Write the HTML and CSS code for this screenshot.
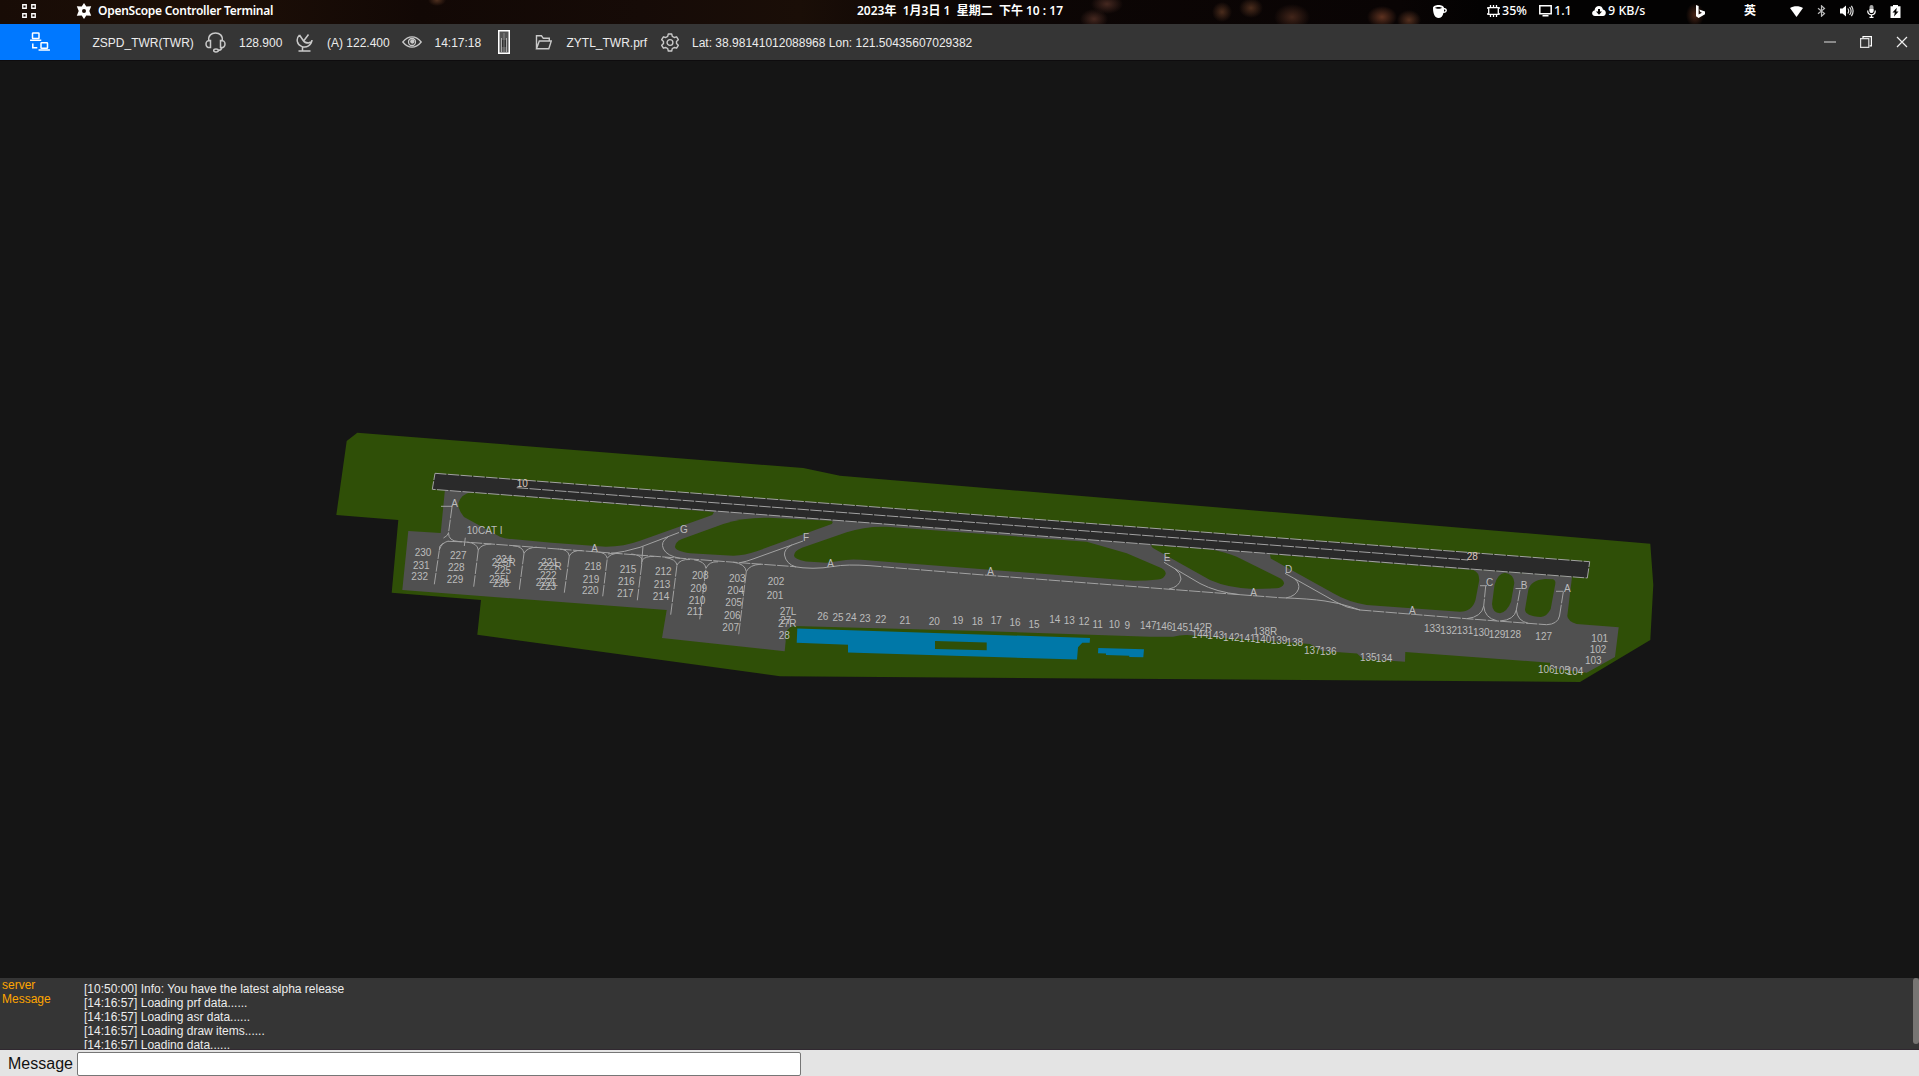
FILE: index.html
```html
<!DOCTYPE html>
<html lang="en">
<head>
<meta charset="utf-8">
<title>OpenScope Controller Terminal</title>
<link rel="stylesheet" href="styles.css">
</head>
<body>
<header class="panel">
  <div class="panel-left">
    <svg class="apps" width="14" height="14" viewBox="0 0 14 14"><path d="M.75.75h3.5v3.5H.75zM9.75.75h3.5v3.5h-3.5zM.75 9.75h3.5v3.5H.75zM9.75 9.75h3.5v3.5h-3.5z" fill="none" stroke="#fff" stroke-width="1.3"/></svg>
    <svg class="star" width="16" height="16" viewBox="0 0 16 16"><path fill="#fff" fill-rule="evenodd" d="M8 0l2.300 3.400 4.900-.1L13.300 8l1.900 4.700-4.900-.1L8 16l-2.300-3.400-4.900.1L2.700 8 .8 3.300l4.900.1zM8 6a2 2 0 1 0 0 4 2 2 0 0 0 0-4z"/></svg>
    <span class="app-name">OpenScope Controller Terminal</span>
  </div>
  <div class="clock">2023年&nbsp; 1月3日 1&nbsp; 星期二&nbsp; 下午 10 : 17</div>
  <div class="tray">
    <span class="t-cup"><svg width="14" height="13" viewBox="0 0 14 13"><path fill="#fff" fill-rule="evenodd" d="M0 3c0-4 11-4 11 0 4-.5 4 5-.6 5C10 11 8 13 5.500 13 2 13 0 9 0 3zm2-.2c1.500 1.300 5.500 1.300 7 0-1.500-1.200-5.500-1.200-7 0zM11 4.500v2c2 0 2-2 0-2z"/></svg></span>
    <span class="t-cpu"><svg width="13" height="12" viewBox="0 0 13 12"><path d="M1.700 2.700h9.600v6.600H1.700zM3.500 0v2M6.500 0v2M9.500 0v2M3.500 10v2M6.500 10v2M9.500 10v2M0 3h1M0 9h1M12 3h1M12 9h1" fill="none" stroke="#fff" stroke-width="1.300"/></svg><b>35%</b></span>
    <span class="t-load"><svg width="13" height="12" viewBox="0 0 13 12"><path d="M.8.8h11.400v8H.8z" fill="none" stroke="#fff" stroke-width="1.500"/><path fill="#fff" d="M3.500 10h6v1.500h-6z"/></svg><b>1.1</b></span>
    <span class="t-net"><svg width="14" height="10" viewBox="0 0 14 10"><path fill="#fff" fill-rule="evenodd" d="M3 10C-1 9.500-.5 5 2.500 4.500 3-1 10-1.500 11 3.500c4 .5 3.500 6.500 0 6.500zM6 3v2.500H4L7 8.800l3-3.300H8V3z"/></svg><b>9 KB/s</b></span>
    <span class="t-bing"><svg width="9" height="13" viewBox="0 0 9 13"><path fill="#fff" d="M0 0l2.600 1v8.500L6 7.700 4.300 7l-1-2.500L9 6.500v2.800L2.600 13 0 11.300z"/></svg></span>
    <span class="t-ime"><b>英</b></span>
    <span class="t-wifi"><svg width="13" height="11" viewBox="0 0 13 11"><path fill="#fff" d="M0 2c3.500-2.500 9.500-2.500 13 0L6.500 11z"/></svg></span>
    <span class="t-bt"><svg width="9" height="12" viewBox="0 0 9 12"><path d="M1 3.200l6.500 5.300-3 2.700V.8l3 2.700L1 8.800" fill="none" stroke="#bbb" stroke-width="1.200"/></svg></span>
    <span class="t-vol"><svg width="14" height="12" viewBox="0 0 14 12"><path fill="#fff" d="M0 3.500h2.500L6 .5v11l-3.500-3H0z"/><path d="M7.800 3.500q1.800 2.500 0 5M9.600 2q3 4 0 8M11.400.8q3.400 5.200 0 10.400" fill="none" stroke="#ddd" stroke-width="1.200"/></svg></span>
    <span class="t-mic"><svg width="9" height="13" viewBox="0 0 9 13"><rect x="2.500" width="4" height="8" rx="2" fill="#aaa"/><path d="M2.500 4h4v2a2 2 0 0 1-4 0z" fill="#fff"/><path d="M.7 5.500q0 4.300 3.800 4.300t3.800-4.300M4.500 10v2.300M2.500 12.300h4" fill="none" stroke="#fff" stroke-width="1.200"/></svg></span>
    <span class="t-bat"><svg width="11" height="13" viewBox="0 0 11 13"><path fill="#fff" fill-rule="evenodd" d="M3 0h5v1.200h2.500V13H.5V1.200H3zM6.800 2.800L2.500 7.500h2.300L4 11.500l4.500-5H6.200z"/></svg></span>
  </div>
</header>

<nav class="toolbar">
  <button class="connect" aria-label="Connection"><svg width="20" height="20" viewBox="0 0 20 20" fill="none" stroke="#fff" stroke-width="1.500"><rect x="2.500" y="1" width="6.500" height="5.500" rx=".6"/><path d="M.8 9v-.8h9.700V9M2.800 11.500v4.300h4.500"/><rect x="11" y="10.800" width="6.500" height="5.500" rx=".6"/><path d="M9.300 18.700v-.7h9.900v.7"/></svg></button>
  <span class="f-call">ZSPD_TWR(TWR)</span>
  <span class="f-headset"><svg width="21" height="21" viewBox="0 0 21 21" fill="none" stroke="#c9c9c9" stroke-width="1.500"><path d="M3.800 8.500C3 3.500 6.500 1 10.500 1s7.500 2.500 6.700 7.500"/><path d="M5.500 8.500v7C2.500 16 1 14.500 1 12s1.500-3.700 4.500-3.500zM15.500 8.500v7c3 .5 4.500-1 4.500-3.500s-1.500-3.700-4.500-3.500zM17 15.500c-.5 2-2 3-4 3"/><ellipse cx="11" cy="18.500" rx="2.300" ry="1.400"/></svg></span>
  <span class="f-freq">128.900</span>
  <span class="f-dish"><svg width="18" height="19" viewBox="0 0 18 19" fill="none" stroke="#c9c9c9" stroke-width="1.500"><path d="M3.500 2C-.5 6 1 12 6 13.600c4.500 1.400 9.500-1 10-6.600M3.500 2l3.700 5.500q1.500 2.500 5.300 2.500l3.500-1.500M8 7.500L12.500 1.500M6.500 14v3.500M2.500 18h12"/></svg></span>
  <span class="f-atis">(A) 122.400</span>
  <span class="f-eye"><svg width="20" height="12" viewBox="0 0 20 12" fill="none" stroke="#c9c9c9" stroke-width="1.300"><path d="M.8 6Q5 .8 10 .8T19.200 6Q15 11.200 10 11.200T.8 6z"/><circle cx="10" cy="6" r="3.500"/><circle cx="10.300" cy="5.500" r="1.500" fill="#c9c9c9"/></svg></span>
  <span class="f-time">14:17:18</span>
  <span class="f-strip"><svg width="12" height="24" viewBox="0 0 12 24"><rect x=".75" y=".75" width="10.500" height="22.500" fill="#555" stroke="#fff" stroke-width="1.500"/><path d="M3.500 8v14M8.500 8v14" stroke="#aaa"/><path d="M6 3v19" stroke="#888"/><path d="M4.800 10v7M7.200 10v7" stroke="#222"/></svg></span>
  <span class="f-folder"><svg width="17" height="15" viewBox="0 0 17 15" fill="none" stroke="#c9c9c9" stroke-width="1.400"><path d="M1.500 13.800V.8h5l1.800 2.500h6V6M1.500 13.800L4.300 6h12l-2.500 7.800z"/></svg></span>
  <span class="f-prf">ZYTL_TWR.prf</span>
  <span class="f-gear"><svg width="18" height="19" viewBox="0 0 18 19" fill="none" stroke="#c9c9c9" stroke-width="1.400"><path stroke-linejoin="round" d="M7.300 1h3.400l.6 2.400 1.900 1.100 2.400-.7 1.700 2.900-1.800 1.700v2.200l1.800 1.700-1.700 2.900-2.400-.7-1.900 1.100-.6 2.400H7.300l-.6-2.400-1.900-1.100-2.400.7-1.700-2.900 1.800-1.700V8.400L.7 6.700l1.700-2.900 2.400.7 1.900-1.100z"/><circle cx="9" cy="9.500" r="2.900"/></svg></span>
  <span class="f-pos">Lat: 38.98141012088968 Lon: 121.50435607029382</span>
  <span class="window-buttons">
    <svg width="12" height="12" viewBox="0 0 12 12"><path d="M0 6h12" stroke="#8a8a8a" stroke-width="2"/></svg>
    <svg width="12" height="12" viewBox="0 0 12 12" fill="none"><path d="M3 2V.6h8.400v9.200H9.500" stroke="#fff" stroke-width="1.200"/><path d="M.6 2.600h8.200v8.800H.6z" stroke="#ddd" stroke-width="1.200"/></svg>
    <svg width="12" height="12" viewBox="0 0 12 12"><path d="M1 1l10 10M11 1L1 11" stroke="#eee" stroke-width="1.200"/></svg>
  </span>
</nav>

<main class="scope">
<svg class="map" width="1919" height="918" viewBox="0 60 1919 918">
  <path class="grass" d="M357.300 432.700L346.700 441 336.300 515l62 5-6.600 72.700L481 600l-3.700 34.700L780 676.300 1580 682l70.300-42 3-55-3-41.300L840 475.700l-36.700-7.700z"/>
  <path class="apron" d="M445 489L440.700 533l-32.400-2-6 59 264.400 20-4.700 28 122.700 13.300L785.700 641Q784 628 794 626L980 631l170 5.700h23q8-2 14-1.700L1310 644l12 7 35 2.500 6 5.500 42 2.700.3-9.700 144.700 10.700.7 5.300 36 4.700 28.300-15.700 3.700-29.700-42-3.300q-9-3-9.400-8L1572 577z"/>
  <g class="grass">
    <path d="M471.700 492L714 512l-1.700 3L640 540.700Q624 546.500 606 546.700L551.700 542.700 511.700 539Q505 539 500 536.700L464 517Q458 510 458.300 503.300 461 494 471.700 492z"/>
    <path d="M768.300 517.700L831 520.700q3 1 .7 3.300L756.700 551.300Q745 555.500 733.300 555.700L690 553.300Q675 551 675 546.700 675 542 682 539L723.300 524Q745 517 768.300 517.700z"/>
    <path d="M886.700 526.700L1086.700 541.700 1126.700 553.300 1161.700 568.300Q1166 571 1165.700 574 1164 579 1158 579.500 1146 580.800 1133.300 580.700L980 569 870 560.500Q853 559 846 560L826.700 562.700 806 561.500Q794 559 794 555.500 794 551 802 547.700L846.700 532.300Q865 526 886.700 526.700z"/>
    <path d="M1151.700 545L1210 549.300Q1225 552 1236.700 556.700L1280 578.300Q1284 580.500 1284 583.700 1282 588 1276 588.300L1253 589Q1228 588 1210 580L1153.300 548.300Q1150.500 546 1151.700 545z"/>
    <path d="M1270 554.300L1473.300 570Q1479 572 1479.300 580L1475.500 600Q1472 611.700 1460 611.700L1366.700 605Q1348 602 1333.300 593.300L1270.700 558.500z"/>
    <path d="M1505 572.700Q1514 574 1514.300 583L1511 602Q1507 612 1500 613.300 1492.500 613 1492 604L1494.500 585Q1498 573 1505 572.700z"/>
    <path d="M1545 579L1553 579.300Q1556 580.500 1555.300 584L1550.700 609Q1547 616.500 1541 617 1525 616 1525 609.500L1528.300 590Q1531 580 1545 579z"/>
  </g>
  <path class="pool" fill-rule="evenodd" d="M797.300 628.500L1090 638l-.3 4.700h-7.400l-4.300 4.600-1 12.200L848 652.500v-7.800l-51.300-2zM935 641v8l51.700 1.200v-7.700zM1098.300 648l45.700 1.300-.7 8-14-.3v-1.300l-23.300-.7v-1.500l-8-.3z"/>
  <path class="runway" d="M435 473.300L1589.700 561.700 1587.300 578 432.300 489.300z"/>
  <g class="lines">
    <path class="dash" d="M435 473.300L1589.700 561.700 1587.300 578 432.300 489.300zM516.700 487.700L1468 560"/>
    <path class="dash" d="M452 507L448.500 533M458 541.500L740 562.700 793 566.500M870 565.700L980 574.700 1240 594.700 1280 597.700M1360 610L1466.700 618.700 1546.700 624.700M1563.300 592L1559.500 616M1485.700 586l-2 20M1520 590l-3.700 20"/>
    <path d="M441 506.300h11M465.300 537.700l-1 8.300M1480 585.700h7M1515.500 588.500h6M1556 591.300h7.500M448.500 533q0 8 10 8.500M448.500 533q-1 3-5 5"/>
    <path d="M793 566.500q20 3.500 40 0 14-2.500 37-.8M1280 597.700q30 1 45 3.300 14 2 26 6l9 3M1546.700 624.700q11-.5 12.800-8.700M1483.700 606q-2 11-17 12.700M1483.700 606q1 12 13 14.700M1516.300 610q-2 10-16.300 11M1516.300 610q1 11 12 13.300"/>
    <path d="M608 554Q625 552 640 547.300L679 532.500M668 537Q660 542 663.500 549 667 556 680 558.300M643 546.500L641.500 564M740 562.700q6-1 13-3.700L803 541M791.700 545Q784 549 784.500 555 786 564 796 567M1164 562.300L1200 583.500Q1216 592 1240 594.700M1175 569Q1181 573 1181 579 1179 587 1169 589M1285 573.300L1336 602q10 6 24 8M1295 579Q1300 584 1298.500 589 1296 596 1286 598"/>
    <path class="dash" d="M434.300 584.300l5-34M473.700 586.700l4.600-36.700M519.300 589.700l4.700-36.400M564.300 592.700l5-36.700M602.700 596.300l4.600-38M637.300 600.300l5-40.300M670.700 614.700l6.300-49.700M699.700 619.300l6.300-51M738.700 634.300l7.600-62.600"/>
    <path d="M439.300 550q2-7 9-9M439.300 550q-1-4 4-7M448 541.300l14 .5M478.300 550q-1-7-11-7.800M478.300 550q3-6 13-6M524 553.300q-1-7-11-7.600M524 553.300q3-6 13-6M569.300 556q-1-7-11-7M569.300 556q3-6 13-5.500M607.300 558.300q-1-6-11-6.500M607.300 558.300q3-5 12-5M642.300 560q-1-5-11-6M642.300 560q3-4 12-3.500M677 565q-1-6-12-7.500M677 565q3-6 13-5.500M706 568.300q-1-7-12-8.500M706 568.300q3-7 12-6.500M746.300 571.700q-1-8-13-9.500M746.300 571.700q3-7 15-7.500"/>
  </g>
  <g class="labels" transform="translate(0 3.600)">
    <g class="rwy"><text x="522.300" y="483.700">10</text><text x="1472.300" y="556.300">28</text></g>
    <text x="454.700" y="503.700">A</text><text x="484.700" y="530.300">10CAT I</text><text x="594.700" y="548.700">A</text>
    <text x="423" y="552.300">230</text><text x="421.300" y="565.300">231</text><text x="419.700" y="576.300">232</text>
    <text x="458.300" y="555.300">227</text><text x="456.300" y="567.300">228</text><text x="455" y="579.300">229</text>
    <text x="504" y="559.300">224</text><text x="503.700" y="562.300">225R</text><text x="502.700" y="570.300">225</text><text x="500" y="579.300">225L</text><text x="501" y="583.300">226</text>
    <text x="549.700" y="562.300">221</text><text x="549.700" y="566.300">222R</text><text x="548.300" y="575.300">222</text><text x="546.800" y="582.300">222L</text><text x="547.700" y="586.300">223</text>
    <text x="593" y="566.300">218</text><text x="591" y="579.300">219</text><text x="590.300" y="590.300">220</text>
    <text x="628" y="569.300">215</text><text x="626.300" y="581.300">216</text><text x="625.300" y="593.300">217</text>
    <text x="663.300" y="571.300">212</text><text x="662" y="584.300">213</text><text x="661" y="596.300">214</text>
    <text x="684" y="529.300">G</text><text x="700.300" y="575.300">208</text><text x="698.700" y="588.300">209</text><text x="697" y="600.300">210</text><text x="695" y="611.300">211</text>
    <text x="737.300" y="578.300">203</text><text x="735.700" y="590.300">204</text><text x="733.700" y="602.300">205</text><text x="732.300" y="615.300">206</text><text x="730.700" y="627.300">207</text>
    <text x="806" y="537.700">F</text><text x="776" y="581.300">202</text><text x="775" y="595.300">201</text>
    <text x="788" y="611.300">27L</text><text x="785.700" y="620.300">27</text><text x="787.300" y="623.300">27R</text><text x="784.300" y="635.300">28</text>
    <text x="830.700" y="563.700">A</text><text x="822.700" y="616.300">26</text><text x="838" y="617.300">25</text><text x="851" y="617.300">24</text><text x="865" y="618.300">23</text><text x="880.700" y="619.300">22</text><text x="905" y="620.300">21</text><text x="934.300" y="621.300">20</text><text x="957.700" y="620.300">19</text>
    <text x="977.300" y="621.300">18</text><text x="996.300" y="620.300">17</text><text x="1015" y="622.300">16</text><text x="1034" y="624.300">15</text><text x="1054.700" y="619.300">14</text><text x="1069.300" y="620.300">13</text><text x="1084" y="621.300">12</text><text x="1097.700" y="624.300">11</text><text x="1114.300" y="624.300">10</text><text x="1127.300" y="625.300">9</text>
    <text x="1148.300" y="625.300">147</text><text x="1164" y="626.300">146</text><text x="1179.700" y="627.300">145</text><text x="1200.300" y="627.300">142R</text>
    <text x="1200" y="634.300">144</text><text x="1215.700" y="635.300">143</text><text x="1231.300" y="637.300">142</text><text x="1247.300" y="638.300">141</text><text x="1263" y="639.300">140</text><text x="1265.300" y="631.300">138R</text><text x="1279" y="640.300">139</text><text x="1294.700" y="642.300">138</text>
    <text x="990.700" y="571.700">A</text><text x="1167" y="557.300">E</text><text x="1253.700" y="592.300">A</text><text x="1288.700" y="569.300">D</text>
    <text x="1312.300" y="650.300">137</text><text x="1328.300" y="651.300">136</text><text x="1368.300" y="657.300">135</text><text x="1384" y="658.300">134</text>
    <text x="1412.300" y="610.700">A</text><text x="1432.300" y="628.300">133</text><text x="1448.700" y="630.300">132</text><text x="1465" y="630.300">131</text><text x="1481.300" y="632.300">130</text><text x="1497" y="634.300">129</text><text x="1512.700" y="634.300">128</text><text x="1543.700" y="636.300">127</text>
    <text x="1489.700" y="582.300">C</text><text x="1524" y="585.300">B</text><text x="1567.300" y="588.300">A</text>
    <text x="1599.700" y="638.300">101</text><text x="1598" y="649.300">102</text><text x="1593.300" y="660.300">103</text><text x="1575" y="671.300">104</text><text x="1561.700" y="670.300">105</text><text x="1546.300" y="669.300">106</text>
  </g>
</svg>
</main>

<section class="console">
  <div class="channel">server<br>Message</div>
  <div class="log">
    <p>[10:50:00] Info: You have the latest alpha release</p>
    <p>[14:16:57] Loading prf data......</p>
    <p>[14:16:57] Loading asr data......</p>
    <p>[14:16:57] Loading draw items......</p>
    <p>[14:16:57] Loading data......</p>
  </div>
  <div class="scroll-thumb"></div>
</section>

<footer class="entry">
  <label for="msg">Message</label>
  <input id="msg" type="text">
</footer>
</body>
</html>
```
FILE: styles.css
```css
* { box-sizing: border-box; }

body {
  margin: 0;
  width: 1919px;
  height: 1076px;
  display: flex;
  flex-direction: column;
  overflow: hidden;
  background: #151515;
  font: 12px "Liberation Sans", Arial, sans-serif;
  color: #ececec;
}

svg { display: block; flex: none; }

/* desktop panel */
.panel {
  flex: none;
  height: 24px;
  padding-bottom: 2px;
  display: grid;
  grid-template-columns: 857px 1fr 486px;
  align-items: center;
  white-space: nowrap;
  color: #fff;
  font: 600 12px/20px "Noto Sans", "Noto Sans CJK SC", sans-serif;
  background:
    radial-gradient(ellipse 9px 12px at 1695px 15px, #4a2618, transparent),
    radial-gradient(ellipse 15px 11px at 1382px 17px, #5e3220, transparent),
    radial-gradient(ellipse 12px 10px at 1409px 20px, #54301f, transparent),
    radial-gradient(ellipse 18px 13px at 1292px 17px, #42251a, transparent),
    radial-gradient(ellipse 12px 10px at 1251px 8px, #4a2c1c, transparent),
    radial-gradient(ellipse 10px 10px at 1222px 12px, #4a2c1c, transparent),
    linear-gradient(120deg, transparent 960px, transparent) no-repeat,
    radial-gradient(ellipse 16px 10px at 1107px 4px, #452820, transparent),
    radial-gradient(ellipse 14px 10px at 1094px 19px, #452820, transparent),
    radial-gradient(ellipse 9px 6px at 437px 0, #50301f, transparent),
    linear-gradient(90deg, #180c06, #1d0f07 220px, #120805 420px, #160b07 640px, #1a0e07 800px, #0d0605 950px, #090404 1400px, #030202 1480px);
}
.panel-left { display: flex; align-items: center; padding-left: 22px; }
.star { margin: 0 6px 0 40px; }
.app-name { letter-spacing: -.26px; }
.tray { display: flex; align-items: center; height: 22px; }
.tray span { display: flex; align-items: center; flex: none; }
.tray b { font-weight: 500; font-size: 12.5px; margin-left: 2px; }
.t-cup { width: 54px; }
.t-cpu { width: 52px; }
.t-load { width: 53px; }
.t-net { width: 104px; }
.t-bing { width: 48px; }
.t-ime { width: 46px; }
.tray .t-ime b { font-weight: 600; font-size: 12px; margin-left: 0; }
.t-wifi { width: 27px; }
.t-bt { width: 23px; }
.t-vol { width: 27px; }
.t-mic { width: 23px; }
.t-bat { width: 11px; }

/* application toolbar */
.toolbar {
  flex: none;
  height: 36px;
  display: flex;
  align-items: stretch;
  background: #353535;
  white-space: nowrap;
}
.toolbar > span { display: flex; align-items: center; flex: none; }
.connect {
  width: 80px;
  margin: 0;
  padding: 0;
  border: 0;
  display: flex;
  align-items: center;
  justify-content: center;
  background: #0078ff;
}
.toolbar > .f-call,
.toolbar > .f-freq,
.toolbar > .f-atis,
.toolbar > .f-time,
.toolbar > .f-prf,
.toolbar > .f-pos { padding-top: 2px; }
.f-call { width: 125px; padding-left: 12.5px; }
.f-headset { width: 34px; }
.f-freq { width: 57px; }
.f-dish { width: 31px; }
.f-atis { width: 75px; }
.f-eye { width: 32.5px; }
.f-time { width: 63.5px; }
.f-strip { width: 37px; }
.f-folder { width: 31.5px; }
.f-prf { width: 94.5px; }
.f-gear { width: 31px; }
.toolbar > .window-buttons { margin-left: auto; padding-right: 11px; gap: 24px; }

/* radar scope */
.scope { flex: none; height: 918px; border-top: 1px solid #0e0c0e; }
.map { margin-top: -1px; }
.grass { fill: #2f4f07; }
.apron { fill: #505050; }
.runway { fill: #2a2a2a; }
.pool { fill: #0078a8; }
.lines { fill: none; stroke: #a2a2a2; stroke-width: 1; }
.dash { stroke-dasharray: 11.500 1.300; }
.labels { font-size: 10px; fill: #bcbcbc; text-anchor: middle; }
.rwy { fill: #dcc8bc; }

/* message console */
.console {
  flex: none;
  height: 72px;
  display: flex;
  overflow: hidden;
  background: #353535;
  border-bottom: 1px solid #302830;
  line-height: 14px;
}
.channel { width: 84px; padding-left: 2px; color: #ffa500; }
.log { flex: 1; padding-top: 4px; }
.log p { margin: 0; }
.scroll-thumb { width: 6px; height: 66px; border-radius: 3px; background: #777573; }

.entry {
  flex: none;
  height: 26px;
  display: flex;
  align-items: center;
  padding-left: 8px;
  background: #e4e4e4;
  color: #111;
  font-size: 16px;
}
.entry label { width: 69px; padding-top: 2px; }
.entry input {
  width: 724px;
  height: 24px;
  margin-top: 2px;
  border: 1px solid #767676;
  border-radius: 2px;
  background: #fff;
}
```
